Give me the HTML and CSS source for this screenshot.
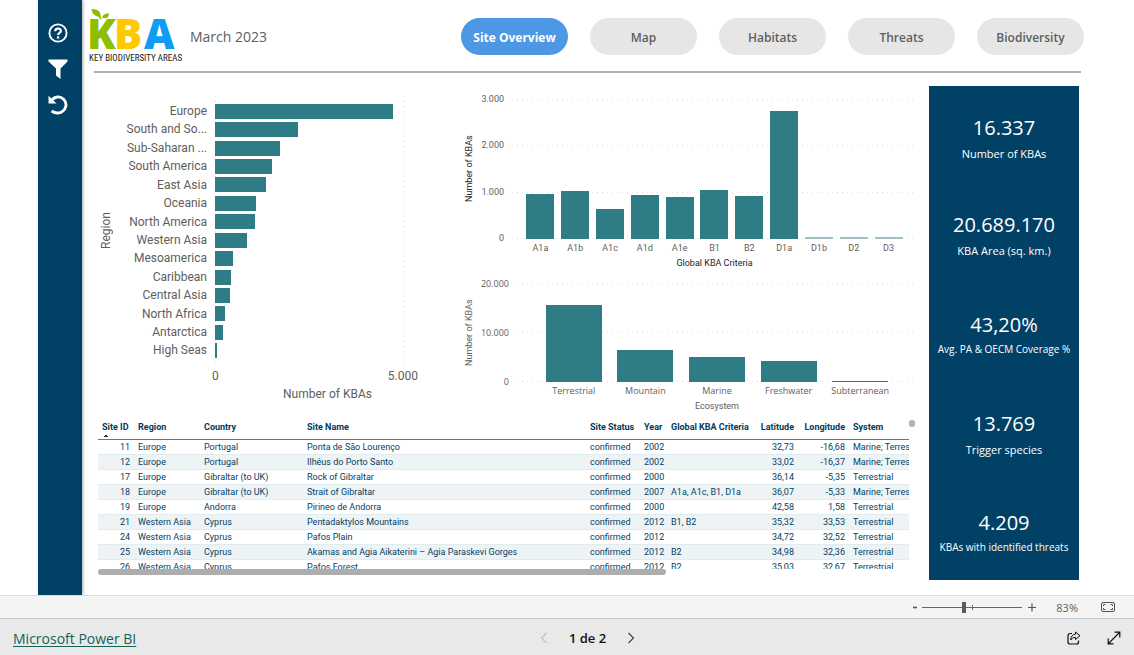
FILE: index.html
```html
<!DOCTYPE html>
<html lang="en">
<head>
<meta charset="utf-8">
<title>KBA Site Overview</title>
<link rel="stylesheet" href="styles.css">
</head>
<body>
<div class="report">
  <aside class="sidebar">
    <button class="side-btn" aria-label="Help"><svg width="20" height="20" viewBox="0 0 20 20"><circle cx="10" cy="10" r="8.6" fill="none" stroke="#fff" stroke-width="1.9"/><path d="M7.2 8.2C7.2 4.6 12.9 4.7 12.9 7.9c0 2-2.8 2.100-2.800 4.200" fill="none" stroke="#fff" stroke-width="2.200"/><rect x="8.900" y="13.300" width="2.300" height="2.300" fill="#fff"/></svg></button>
    <button class="side-btn" aria-label="Filter"><svg width="20" height="20" viewBox="0 0 20 20"><path d="M.5.5h19v2L12.500 9.500V20L8 16.500v-7L.5 2.500z" fill="#fff"/></svg></button>
    <button class="side-btn" aria-label="Reset"><svg width="20" height="20" viewBox="0 0 20 20"><path d="M3.500 5.500C6.500 1.300 12 .8 15.600 4.200c4 3.800 2.800 10.300-2 12.700-3.200 1.600-7 1.300-10-.9" fill="none" stroke="#fff" stroke-width="2.800"/><path d="M.5.700V8.500H8.500z" fill="#fff"/></svg></button>
  </aside>
  <div class="content">
    <header class="header">
      <svg class="logo" width="95" height="58" viewBox="0 0 95 58" role="img" aria-label="KBA Key Biodiversity Areas">
        <text class="logo-name" y="42"><tspan x="-2" fill="#8fbe00">K</tspan><tspan x="25" fill="#ffc900">B</tspan><tspan x="55" fill="#0f9df2">A</tspan></text>
        <path d="M2.500 2C8 1.500 12.500 4.500 11.500 10 6 9.500 3 7 2.500 2zM20 6.500c.2 4-3 5.800-7 4.200C13.800 7.300 16.500 6 20 6.500z" fill="#8fbe00"/><path d="M8 7c2 1 3.500 3 3.700 5.500" fill="none" stroke="#8fbe00" stroke-width="1.500"/>
        <text class="logo-sub" x="0" y="54">KEY BIODIVERSITY AREAS</text>
      </svg>
      <div class="date">March 2023</div>
      <nav class="tabs">
        <button class="tab active">Site Overview</button>
        <button class="tab">Map</button>
        <button class="tab">Habitats</button>
        <button class="tab">Threats</button>
        <button class="tab">Biodiversity</button>
      </nav>
    </header>
    <main class="main">
      <div class="visuals">
        <div class="charts">
          <section class="region-chart">
            <div class="y-title">Region</div>
            <div class="region-names"><span>Europe</span><span>South and So...</span><span>Sub-Saharan ...</span><span>South America</span><span>East Asia</span><span>Oceania</span><span>North America</span><span>Western Asia</span><span>Mesoamerica</span><span>Caribbean</span><span>Central Asia</span><span>North Africa</span><span>Antarctica</span><span>High Seas</span></div>
            <div class="region-plot">
              <div class="hbar" style="width:94.200%"></div><div class="hbar" style="width:44%"></div><div class="hbar" style="width:34.400%"></div><div class="hbar" style="width:30.200%"></div><div class="hbar" style="width:27%"></div><div class="hbar" style="width:21.700%"></div><div class="hbar" style="width:21.200%"></div><div class="hbar" style="width:16.800%"></div><div class="hbar" style="width:9.500%"></div><div class="hbar" style="width:8.500%"></div><div class="hbar" style="width:8%"></div><div class="hbar" style="width:5.500%"></div><div class="hbar" style="width:4.200%"></div><div class="hbar" style="width:1.100%"></div>
            </div>
            <div class="x-ticks"><span>0</span><span>5.000</span></div>
            <div class="x-title">Number of KBAs</div>
          </section>
          <div class="column-charts">
            <section class="col-chart criteria">
              <div class="y-title dark">Number of KBAs</div>
              <div class="y-ticks"><span>3.000</span><span>2.000</span><span>1.000</span><span>0</span></div>
              <div class="lines"><i></i><i></i><i></i><i></i></div>
              <div class="bars"><div style="height:32%"></div><div style="height:34.200%"></div><div style="height:21.200%"></div><div style="height:31.400%"></div><div style="height:30%"></div><div style="height:35%"></div><div style="height:30.500%"></div><div style="height:91.500%"></div><div class="faint" style="height:1.400%"></div><div class="faint" style="height:1.400%"></div><div class="faint" style="height:1.400%"></div></div>
              <div class="x-labels"><span>A1a</span><span>A1b</span><span>A1c</span><span>A1d</span><span>A1e</span><span>B1</span><span>B2</span><span>D1a</span><span>D1b</span><span>D2</span><span>D3</span></div>
              <div class="x-title dark">Global KBA Criteria</div>
            </section>
            <section class="col-chart ecosystem">
              <div class="y-title">Number of KBAs</div>
              <div class="y-ticks"><span>20.000</span><span>10.000</span><span>0</span></div>
              <div class="lines"><i></i><i></i><i></i></div>
              <div class="bars"><div style="height:78.200%"></div><div style="height:32%"></div><div style="height:25%"></div><div style="height:20.800%"></div><div style="height:1.300%"></div></div>
              <div class="x-labels"><span>Terrestrial</span><span>Mountain</span><span>Marine</span><span>Freshwater</span><span>Subterranean</span></div>
              <div class="x-title">Ecosystem</div>
            </section>
          </div>
        </div>
        <div class="table-area">
          <div class="table-clip">
            <table>
              <colgroup><col class="c-id"><col class="c-region"><col class="c-country"><col class="c-name"><col class="c-status"><col class="c-year"><col class="c-crit"><col class="c-lat"><col class="c-lon"><col class="c-sys"></colgroup>
              <thead><tr><th class="sorted">Site ID</th><th>Region</th><th>Country</th><th>Site Name</th><th>Site Status</th><th>Year</th><th>Global KBA Criteria</th><th class="num">Latitude</th><th class="num">Longitude</th><th>System</th></tr></thead>
              <tbody>
                <tr><td class="num">11</td><td>Europe</td><td>Portugal</td><td>Ponta de São Lourenço</td><td>confirmed</td><td>2002</td><td></td><td class="num">32,73</td><td class="num">-16,68</td><td>Marine; Terres</td></tr>
                <tr><td class="num">12</td><td>Europe</td><td>Portugal</td><td>Ilhéus do Porto Santo</td><td>confirmed</td><td>2002</td><td></td><td class="num">33,02</td><td class="num">-16,37</td><td>Marine; Terres</td></tr>
                <tr><td class="num">17</td><td>Europe</td><td>Gibraltar (to UK)</td><td>Rock of Gibraltar</td><td>confirmed</td><td>2000</td><td></td><td class="num">36,14</td><td class="num">-5,35</td><td>Terrestrial</td></tr>
                <tr><td class="num">18</td><td>Europe</td><td>Gibraltar (to UK)</td><td>Strait of Gibraltar</td><td>confirmed</td><td>2007</td><td>A1a, A1c, B1, D1a</td><td class="num">36,07</td><td class="num">-5,33</td><td>Marine; Terres</td></tr>
                <tr><td class="num">19</td><td>Europe</td><td>Andorra</td><td>Pirineo de Andorra</td><td>confirmed</td><td>2000</td><td></td><td class="num">42,58</td><td class="num">1,58</td><td>Terrestrial</td></tr>
                <tr><td class="num">21</td><td>Western Asia</td><td>Cyprus</td><td>Pentadaktylos Mountains</td><td>confirmed</td><td>2012</td><td>B1, B2</td><td class="num">35,32</td><td class="num">33,53</td><td>Terrestrial</td></tr>
                <tr><td class="num">24</td><td>Western Asia</td><td>Cyprus</td><td>Pafos Plain</td><td>confirmed</td><td>2012</td><td></td><td class="num">34,72</td><td class="num">32,52</td><td>Terrestrial</td></tr>
                <tr><td class="num">25</td><td>Western Asia</td><td>Cyprus</td><td>Akamas and Agia Aikaterini – Agia Paraskevi Gorges</td><td>confirmed</td><td>2012</td><td>B2</td><td class="num">34,98</td><td class="num">32,36</td><td>Terrestrial</td></tr>
                <tr><td class="num">26</td><td>Western Asia</td><td>Cyprus</td><td>Pafos Forest</td><td>confirmed</td><td>2012</td><td>B2</td><td class="num">35,03</td><td class="num">32,67</td><td>Terrestrial</td></tr>
              </tbody>
            </table>
          </div>
          <div class="v-thumb"></div>
          <div class="h-thumb"></div>
        </div>
      </div>
      <section class="kpis">
        <div class="kpi"><strong>16.337</strong><span>Number of KBAs</span></div>
        <div class="kpi"><strong>20.689.170</strong><span>KBA Area (sq. km.)</span></div>
        <div class="kpi compact"><strong>43,20%</strong><span>Avg. PA &amp; OECM Coverage %</span></div>
        <div class="kpi"><strong>13.769</strong><span>Trigger species</span></div>
        <div class="kpi compact"><strong>4.209</strong><span>KBAs with identified threats</span></div>
      </section>
    </main>
  </div>
</div>
<div class="zoom-bar">
  <button aria-label="Zoom out"><svg width="6" height="12" viewBox="0 0 6 12"><path d="M1 6.500h4" stroke="#555" stroke-width="1.600"/></svg></button>
  <input type="range" min="0" max="100" value="41" aria-label="Zoom">
  <button aria-label="Zoom in"><svg width="8" height="12" viewBox="0 0 8 12"><path d="M0 6.500h8M4 2.500v8" stroke="#555" stroke-width="1.200"/></svg></button>
  <span class="zoom-value">83%</span>
  <button aria-label="Fit to page"><svg width="14" height="10" viewBox="0 0 14 10"><rect x=".5" y=".5" width="13" height="9" rx="1.500" fill="none" stroke="#555"/><path d="M2.500 4V2.500H4.500M9.500 2.500h2V4M11.500 6v1.500h-2M4.500 7.500h-2V6" fill="none" stroke="#555"/></svg></button>
</div>
<footer class="footer">
  <div class="foot-left"><a href="#">Microsoft Power BI</a></div>
  <div class="pager">
    <button aria-label="Previous page"><svg width="8" height="12" viewBox="0 0 8 12"><path d="M6.500 1 1.500 6l5 5" fill="none" stroke="#c2c2c2" stroke-width="1.200"/></svg></button>
    <span>1 de 2</span>
    <button aria-label="Next page"><svg width="8" height="12" viewBox="0 0 8 12"><path d="M1.500 1l5 5-5 5" fill="none" stroke="#444" stroke-width="1.200"/></svg></button>
  </div>
  <div class="foot-right">
    <button aria-label="Share"><svg width="14" height="14" viewBox="0 0 14 14"><path d="M5 2.500H3a2 2 0 0 0-2 2V11a2 2 0 0 0 2 2h6.500a2 2 0 0 0 2-2V9.500" fill="none" stroke="#111" stroke-width="1.200"/><path d="M8.500 1l4.500 3.800-4.500 3.700V6.500C6 6.400 4.800 7.300 3.700 9 3.900 5.500 5.500 3.300 8.500 3.100z" fill="none" stroke="#111" stroke-linejoin="round"/></svg></button>
    <button aria-label="Full screen"><svg width="14" height="14" viewBox="0 0 14 14"><path d="M1.500 12.500l11-11M7.500 1.200h5.300v5.300M1.200 7.500v5.300h5.300" fill="none" stroke="#111" stroke-width="1.200"/></svg></button>
  </div>
</footer>
</body>
</html>
```
FILE: styles.css
```css
* { box-sizing: border-box; }
body {
  margin: 0;
  min-height: 100vh;
  display: flex;
  flex-direction: column;
  background: #fff;
  color: #605e5c;
  font-family: "Open Sans", "Noto Sans", sans-serif;
}
button {
  border: 0;
  padding: 0;
  background: none;
  font: inherit;
  color: inherit;
  display: flex;
  align-items: center;
  justify-content: center;
}
.report { flex: 1; display: flex; padding-left: 38px; }
.sidebar {
  width: 44px;
  flex: none;
  background: #014165;
  box-shadow: 1px 0 3px #0005;
  padding: 23px 5px 0 0;
  display: flex;
  flex-direction: column;
  align-items: center;
  gap: 16px;
}
.content { flex: 1; min-width: 0; padding: 0 50px 15px 7px; }
.header {
  height: 73px;
  display: flex;
  align-items: flex-start;
  margin: 0 3px 13px 5px;
  border-bottom: 2px solid #b0b0b0;
}
.logo { flex: none; margin: 7px 0 0 -5px; }
.logo-name { font-size: 42px; font-weight: 800; }
.logo-sub { font-family: "Roboto Condensed", "Liberation Sans Narrow", Roboto, sans-serif; font-size: 9px; fill: #222; }
.date { margin: 27px auto 0 6px; font-size: 14px; line-height: 20px; white-space: nowrap; }
.tabs { display: flex; gap: 22px; margin: 18px -3px 0 16px; }
.tab {
  width: 107px;
  height: 37px;
  padding-top: 2px;
  border-radius: 19px;
  background: #e6e6e6;
  font-size: 12px;
  font-weight: 600;
}
.tab.active { background: #4c98e4; color: #fff; font-weight: 700; }
.main { display: flex; margin: 0 5px; }
.visuals { flex: 1; min-width: 0; padding-right: 12px; }
.charts { display: grid; grid-template-columns: 368fr 455fr; }
.y-title {
  writing-mode: vertical-rl;
  transform: rotate(180deg);
  text-align: center;
  font-family: Roboto, sans-serif;
  line-height: 14px;
}
.x-title { text-align: center; font-family: Roboto, sans-serif; }
.dark { color: #252423; }
.region-chart {
  display: grid;
  grid-template-columns: 14px 94px 1fr;
  grid-template-rows: 270px 20px 16px;
  padding: 10px 58px 0 5px;
  font-family: Roboto, sans-serif;
  font-size: 12px;
}
.region-names { display: flex; flex-direction: column; padding: 6px 0; text-align: right; white-space: nowrap; }
.region-names span { flex: 1; line-height: 18px; }
.region-plot {
  margin-left: 8px;
  display: flex;
  flex-direction: column;
  justify-content: space-around;
  padding: 6px 0;
  background:
    repeating-linear-gradient(#ddd 0 1px, transparent 1px 5px) left / 1px 100% no-repeat,
    repeating-linear-gradient(#ddd 0 1px, transparent 1px 5px) right / 1px 100% no-repeat;
}
.hbar { height: 15px; background: #2e7c85; }
.x-ticks { grid-column: 3; display: flex; justify-content: space-between; margin: 0 -14px 0 5px; line-height: 20px; }
.region-chart .x-title { grid-column: 3; padding-left: 44px; line-height: 16px; }
.column-charts { display: flex; flex-direction: column; gap: 14px; padding-top: 13px; }
.col-chart { display: grid; font-size: 9px; }
.criteria { grid-template: 140px 18px 12px / 14px 28px 1fr; font-family: Roboto, sans-serif; }
.ecosystem { grid-template: 99px 18px 12px / 14px 33px 1fr; }
.y-ticks { display: flex; flex-direction: column; justify-content: space-between; text-align: right; margin: -5px 0; line-height: 11px; }
.lines, .bars { grid-area: 1 / 3; margin-left: 8px; display: flex; }
.lines { flex-direction: column; justify-content: space-between; }
.lines i { height: 1px; background: repeating-linear-gradient(90deg, #ddd 0 1px, transparent 1px 5px); }
.bars { align-items: flex-end; justify-content: space-around; padding: 0 11px; }
.criteria .bars div { width: 28px; }
.ecosystem .bars { padding: 0 21px; }
.ecosystem .bars div { width: 56px; }
.bars div { background: #2e7c85; }
.bars .faint { background: #9cc0c5; }
.x-labels { grid-column: 3; display: grid; grid-auto-flow: column; grid-auto-columns: 1fr; margin-left: 8px; padding: 0 11px; text-align: center; line-height: 18px; }
.ecosystem .x-labels { padding: 0 21px; }
.col-chart .x-title { grid-column: 3; margin-left: 8px; line-height: 12px; }
.table-area {
  display: grid;
  grid-template-columns: 1fr 8px;
  grid-template-rows: 151px 6px;
  padding-left: 4px;
  margin-top: 6px;
}
.table-clip { overflow: hidden; }
table { table-layout: fixed; width: 100%; border-collapse: collapse; font-family: Roboto, sans-serif; font-size: 9px; color: #014165; }
th, td { padding: 0 4px; text-align: left; white-space: nowrap; overflow: hidden; }
th { height: 21px; line-height: 18px; vertical-align: top; font-weight: 700; color: #013a5c; border-bottom: 1px solid #8a6a78; }
th:first-child { padding-right: 0; }
td { height: 15px; line-height: 14px; border-bottom: 1px solid #e1ecee; }
td:last-child { padding-right: 0; }
tbody tr:nth-child(even) { background: #eef4f6; }
.num { text-align: right; }
.sorted { background: conic-gradient(from 135deg at 50% 0, #013a5c 0 90deg, transparent 0) 5px 16px / 6px 3px no-repeat; }
.c-id { width: 36px; } .c-region { width: 66px; } .c-country { width: 103px; } .c-status { width: 54px; }
.c-year { width: 27px; } .c-crit { width: 88px; } .c-lat { width: 43px; } .c-lon { width: 51px; } .c-sys { width: 60px; }
.v-thumb { width: 6px; height: 7px; border-radius: 3px; background: #b3b0ad; margin-top: 2px; }
.h-thumb { width: 70%; height: 6px; border-radius: 3px; background: #adadab; }
.kpis { width: 150px; flex: none; background: #014165; color: #fff; display: flex; flex-direction: column; min-height: 494px; }
.kpi { flex: 1; display: flex; flex-direction: column; align-items: center; justify-content: center; padding-top: 11px; white-space: nowrap; }
.kpi strong { font-size: 20px; font-weight: 400; line-height: 28px; }
.kpi span { font-size: 11px; line-height: 24px; }
.kpi.compact { padding-bottom: 4px; }
.kpi.compact span { font-size: 10px; line-height: 20px; }
.zoom-bar {
  height: 24px;
  display: flex;
  align-items: center;
  justify-content: flex-end;
  padding-right: 19px;
  background: #f4f4f4;
  border-top: 1px solid #dcdcdc;
  border-bottom: 1px solid #c6c6c6;
}
.zoom-bar input {
  -webkit-appearance: none;
  appearance: none;
  width: 100px;
  height: 12px;
  margin: 0 6px 0 4px;
  background:
    linear-gradient(#666, #666) 50px 4px / 1px 5px no-repeat,
    linear-gradient(#666, #666) 0 6px / 100% 1px no-repeat;
}
.zoom-bar input::-webkit-slider-thumb { -webkit-appearance: none; width: 4px; height: 11px; background: #5c5c5c; }
.zoom-value { font-size: 11px; margin: 0 23px 0 20px; }
.footer { height: 36px; display: grid; grid-template-columns: 1fr auto 1fr; align-items: center; background: #e9e9e9; padding: 1px 13px 0; }
.foot-left a { font-size: 14px; color: #116458; text-underline-offset: 2px; }
.pager { display: flex; align-items: center; gap: 21px; margin-left: 41px; color: #111; font-size: 13px; font-weight: 600; }
.foot-right { display: flex; justify-content: flex-end; gap: 26px; }
```
